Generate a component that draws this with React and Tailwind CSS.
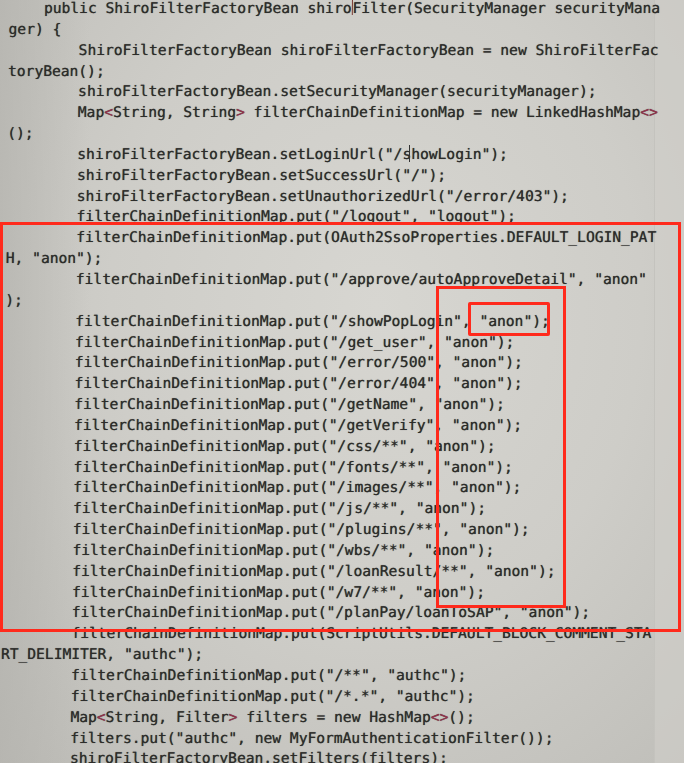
const lines = [
  "    public ShiroFilterFactoryBean shiro|Filter(SecurityManager securityMana",
  "ger) {",
  "        ShiroFilterFactoryBean shiroFilterFactoryBean = new ShiroFilterFac",
  "toryBean();",
  "        shiroFilterFactoryBean.setSecurityManager(securityManager);",
  "        Map<String, String> filterChainDefinitionMap = new LinkedHashMap<>",
  "();",
  '        shiroFilterFactoryBean.setLoginUrl("/showLogin");',
  '        shiroFilterFactoryBean.setSuccessUrl("/");',
  '        shiroFilterFactoryBean.setUnauthorizedUrl("/error/403");',
  '        filterChainDefinitionMap.put("/logout", "logout");',
  "        filterChainDefinitionMap.put(OAuth2SsoProperties.DEFAULT_LOGIN_PAT",
  'H, "anon");',
  '        filterChainDefinitionMap.put("/approve/autoApproveDetail", "anon"',
  ");",
  '        filterChainDefinitionMap.put("/showPopLogin", "anon");',
  '        filterChainDefinitionMap.put("/get_user", "anon");',
  '        filterChainDefinitionMap.put("/error/500", "anon");',
  '        filterChainDefinitionMap.put("/error/404", "anon");',
  '        filterChainDefinitionMap.put("/getName", "anon");',
  '        filterChainDefinitionMap.put("/getVerify", "anon");',
  '        filterChainDefinitionMap.put("/css/**", "anon");',
  '        filterChainDefinitionMap.put("/fonts/**", "anon");',
  '        filterChainDefinitionMap.put("/images/**", "anon");',
  '        filterChainDefinitionMap.put("/js/**", "anon");',
  '        filterChainDefinitionMap.put("/plugins/**", "anon");',
  '        filterChainDefinitionMap.put("/wbs/**", "anon");',
  '        filterChainDefinitionMap.put("/loanResult/**", "anon");',
  '        filterChainDefinitionMap.put("/w7/**", "anon");',
  '        filterChainDefinitionMap.put("/planPay/loanToSAP", "anon");',
  "        filterChainDefinitionMap.put(ScriptUtils.DEFAULT_BLOCK_COMMENT_STA",
  'RT_DELIMITER, "authc");',
  '        filterChainDefinitionMap.put("/**", "authc");',
  '        filterChainDefinitionMap.put("/*.*", "authc");',
  "        Map<String, Filter> filters = new HashMap<>();",
  '        filters.put("authc", new MyFormAuthenticationFilter());',
  "        shiroFilterFactoryBean.setFilters(filters);",
];

// colour the generic brackets and the caret like the editor does
function CodeLine({ text }) {
  const parts = text.split(/([<>|])/);
  return (
    <div className="whitespace-pre">
      {parts.map((p, i) => {
        if (p === "<" || p === ">")
          return (
            <span key={i} className="text-[#93304a]">
              {p}
            </span>
          );
        if (p === "|")
          return (
            <span
              key={i}
              className="inline-block w-0 h-[15px] align-[-2px] border-l border-[#7a3a34]"
            />
          );
        return <span key={i}>{p}</span>;
      })}
    </div>
  );
}

export default function App() {
  return (
    <div className="relative w-[684px] h-[763px] overflow-hidden bg-[radial-gradient(ellipse_at_55%_40%,#d7d6d1_0%,#cecdc8_50%,#bdbcb7_100%)]">
      {/* left shadow of the photo */}
      <div className="absolute inset-y-0 left-0 w-[90px] bg-gradient-to-r from-[#b4b3ae]/70 to-transparent" />
      {/* right edge band */}
      <div className="absolute inset-y-0 right-0 w-[30px] border-l border-[#c4c3be] bg-[#d0cfca]/60" />

      {/* Code */}
      <div className="relative flex flex-col -mt-[2.5px] pl-[9px] origin-top-left skew-x-[-0.7deg] font-['DejaVu_Sans_Mono',monospace] text-[14.6px] leading-[20.85px] text-[#2c2c2a] [text-shadow:0_0_0.7px_rgba(40,40,38,0.8)]">
        {lines.map((l, i) => (
          <CodeLine key={i} text={l} />
        ))}
      </div>

      {/* I-beam mouse cursor near showLogin */}
      <div className="absolute left-[409px] top-[145px] w-[1px] h-[17px] bg-[#333]" />

      {/* Red annotation boxes */}
      <div className="absolute left-0 top-[222px] w-[681px] h-[410px] border-[3px] border-[#ff2a1c]" />
      <div className="absolute left-[436px] top-[286px] w-[130px] h-[322px] border-[3px] border-[#ff2a1c]" />
      <div className="absolute left-[468px] top-[302px] w-[82px] h-[34px] border-[3px] border-[#ff2a1c] rounded-[2px]" />
    </div>
  );
}
